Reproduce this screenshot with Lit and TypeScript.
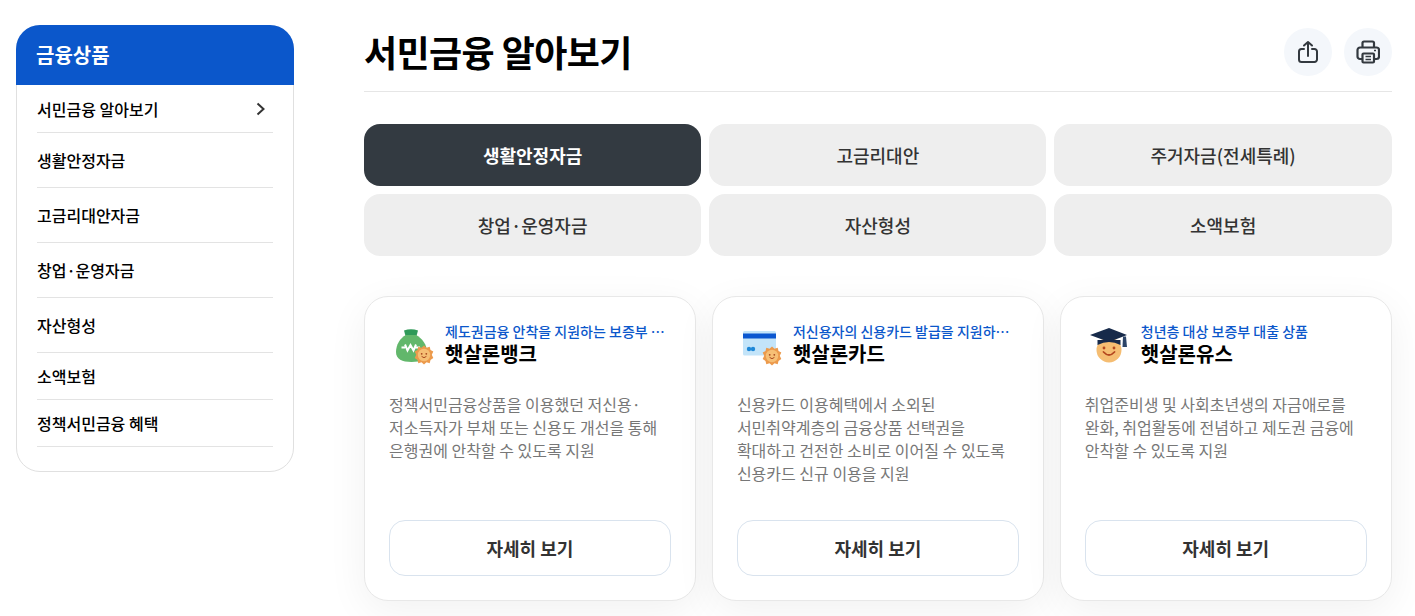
import { LitElement, html, css, svg } from 'lit';
import { customElement } from 'lit/decorators.js';

const sun = (x: number, y: number) => svg`
  <g transform="translate(${x} ${y})">
    <path d="M0-9.500 2.500-7.200 5.700-8.200 6.500-5 9.300-3.400 7.800-.2 9.300 3 6.500 5 5.700 8.200 2.500 7.200 0 9.500-2.500 7.200-5.700 8.200-6.500 5-9.300 3-7.800-.2-9.300-3.400-6.500-5-5.700-8.200-2.500-7.200Z" fill="#ec9a4c"/>
    <circle r="6.200" fill="#f6bf75"/>
    <circle cx="-2.300" cy="-1.200" r=".9" fill="#a8481e"/>
    <circle cx="2.300" cy="-1.200" r=".9" fill="#a8481e"/>
    <path d="M-2.400 1.400Q0 4 2.400 1.400" fill="none" stroke="#a8481e" stroke-width="1"/>
  </g>`;

const bagIcon = html`<svg viewBox="0 0 48 48" width="48" height="48">
  <path d="M15 9.500Q22 7 29 9.500L27.500 15H16.500Z" fill="#2f9a58"/>
  <path d="M17 14H27C33 17 38 24 38 31C38 38 32 41 22.500 41C13 41 7 38 7 31C7 24 11 17 17 14Z" fill="#62b76b"/>
  <path d="M12.500 26.500H16M16 23.500 18.500 29.500 21.500 24 24.500 29.500 27 23.500M26.500 26.500H31" fill="none" stroke="#fff" stroke-width="2"/>
  ${sun(35, 34)}
</svg>`;

const cardIcon = html`<svg viewBox="0 0 48 48" width="48" height="48">
  <rect x="6" y="10" width="33" height="24.500" rx="1.500" fill="#c3e4f9"/>
  <rect x="6" y="12.500" width="33" height="5" fill="#0b57d0"/>
  <circle cx="12" cy="28" r="2.200" fill="#1e88d8"/>
  <circle cx="16" cy="28" r="2.200" fill="#1e88d8"/>
  ${sun(35, 35)}
</svg>`;

const capIcon = html`<svg viewBox="0 0 48 48" width="48" height="48">
  <circle cx="24" cy="29" r="12.500" fill="#f5bd72"/>
  <path d="M12.500 19H35.500V24Q24 18 12.500 24Z" fill="#172a4a"/>
  <path d="M24 7 42 14 24 21 5 14Z" fill="#172a4a"/>
  <path d="M38 15.500H41L42 26H37.500Z" fill="#2c4468"/>
  <circle cx="19" cy="27" r="1.400" fill="#b4471f"/>
  <circle cx="29" cy="27" r="1.400" fill="#b4471f"/>
  <path d="M18.500 31Q24 37 29.500 31" fill="none" stroke="#b4471f" stroke-width="1.800" stroke-linecap="round"/>
</svg>`;

interface Product {
  icon: unknown;
  tag: string;
  name: string;
  lines: string[];
}

const products: Product[] = [
  {
    icon: bagIcon,
    tag: '제도권금융 안착을 지원하는 보증부 …',
    name: '햇살론뱅크',
    lines: ['정책서민금융상품을 이용했던 저신용·', '저소득자가 부채 또는 신용도 개선을 통해', '은행권에 안착할 수 있도록 지원'],
  },
  {
    icon: cardIcon,
    tag: '저신용자의 신용카드 발급을 지원하…',
    name: '햇살론카드',
    lines: ['신용카드 이용혜택에서 소외된', '서민취약계층의 금융상품 선택권을', '확대하고 건전한 소비로 이어질 수 있도록', '신용카드 신규 이용을 지원'],
  },
  {
    icon: capIcon,
    tag: '청년층 대상 보증부 대출 상품',
    name: '햇살론유스',
    lines: ['취업준비생 및 사회초년생의 자금애로를', '완화, 취업활동에 전념하고 제도권 금융에', '안착할 수 있도록 지원'],
  },
];

const tabs = ['생활안정자금', '고금리대안', '주거자금(전세특례)', '창업·운영자금', '자산형성', '소액보험'];

@customElement('app-root')
export class AppRoot extends LitElement {
  static styles = css`
    :host {
      display: block;
      height: 616px;
      overflow: hidden;
      background: #fff;
      font-family: 'Noto Sans CJK KR', 'Noto Sans', sans-serif;
      color: #000;
    }
    .page {
      display: flex;
      align-items: flex-start;
      padding: 25px 23.3px 0 16px;
    }
    .side {
      width: 278px;
      flex: none;
      box-sizing: border-box;
      height: 447px;
      border: 1px solid #e0e0e0;
      border-radius: 24px;
      margin-right: 70px;
    }
    .side-head {
      margin: -1px -1px 0;
      height: 60px;
      background: #0b57cb;
      border-radius: 24px 24px 0 0;
      color: #fff;
      font-size: 20px;
      font-weight: 700;
      line-height: 60px;
      padding-left: 20px;
    }
    .side ul {
      list-style: none;
      margin: 0;
      padding: 0 20px;
    }
    .side li {
      display: flex;
      align-items: center;
      justify-content: space-between;
      height: 55px;
      box-sizing: border-box;
      border-bottom: 1px solid #e3e3e3;
      font-size: 16px;
      font-weight: 500;
    }
    .side li.first { height: 48px; }
    .side li.short { height: 47px; }
    .main { flex: 1; min-width: 0; }
    .title-row {
      display: flex;
      align-items: center;
      justify-content: space-between;
      box-sizing: border-box;
      height: 67px;
      padding: 3px 0 15px;
      border-bottom: 1px solid #e6e6e6;
      margin-bottom: 32px;
    }
    h1 {
      margin: 0 0 3px;
      font-size: 36px;
      line-height: 48px;
      font-weight: 700;
      letter-spacing: -0.6px;
    }
    .actions { display: flex; gap: 12px; }
    .round {
      width: 48px;
      height: 48px;
      border-radius: 50%;
      background: #f4f7fb;
      display: flex;
      align-items: center;
      justify-content: center;
    }
    .tabs {
      display: grid;
      grid-template-columns: repeat(3, minmax(0, 1fr));
      gap: 8px;
      margin-bottom: 40px;
    }
    .tab {
      height: 62px;
      border-radius: 16px;
      background: #eeeeee;
      color: #333;
      font-size: 18px;
      font-weight: 500;
      display: flex;
      align-items: center;
      justify-content: center;
    }
    .tab.on {
      background: #333a41;
      color: #fff;
      font-weight: 700;
    }
    .cards {
      display: grid;
      grid-template-columns: repeat(3, minmax(0, 1fr));
      gap: 16px;
    }
    .card {
      height: 305px;
      box-sizing: border-box;
      border: 1px solid #e8e8e8;
      border-radius: 24px;
      background: #fff;
      box-shadow: 0 10px 40px rgba(0, 0, 0, 0.06);
      padding: 24px;
      display: flex;
      flex-direction: column;
    }
    .card-head {
      display: flex;
      align-items: flex-start;
      gap: 8px;
      height: 48px;
      margin-bottom: 24px;
    }
    .card-head svg { flex: none; }
    .card-titles { min-width: 0; flex: 1; }
    .tag {
      font-size: 14px;
      line-height: 20px;
      font-weight: 500;
      color: #0b57cb;
      white-space: nowrap;
    }
    .name {
      font-size: 20px;
      line-height: 26px;
      font-weight: 700;
      color: #000;
    }
    .desc {
      flex: 1;
      font-size: 16px;
      line-height: 23px;
      color: #777;
    }
    .btn {
      height: 56px;
      box-sizing: border-box;
      border: 1px solid #d9e3ee;
      border-radius: 16px;
      background: #fff;
      color: #333;
      font-size: 18px;
      font-weight: 700;
      display: flex;
      align-items: center;
      justify-content: center;
    }
  `;

  render() {
    return html`
      <div class="page">
        <aside class="side">
          <div class="side-head">금융상품</div>
          <ul>
            <li class="first">
              서민금융 알아보기
              <svg width="24" height="24" viewBox="0 0 24 24"><path d="M8.500 6.500 14.500 12 8.500 17.500" fill="none" stroke="#333" stroke-width="2"/></svg>
            </li>
            <li>생활안정자금</li>
            <li>고금리대안자금</li>
            <li>창업·운영자금</li>
            <li>자산형성</li>
            <li class="short">소액보험</li>
            <li class="short">정책서민금융 혜택</li>
          </ul>
        </aside>
        <main class="main">
          <div class="title-row">
            <h1>서민금융 알아보기</h1>
            <div class="actions">
              <div class="round">
                <svg width="24" height="24" viewBox="0 0 24 24" fill="none" stroke="#33393f" stroke-width="2" stroke-linecap="round" stroke-linejoin="round">
                  <path d="M8 9H5.500A2.500 2.500 0 0 0 3 11.500V19.500A2.500 2.500 0 0 0 5.500 22H18.500A2.500 2.500 0 0 0 21 19.500V11.500A2.500 2.500 0 0 0 18.500 9H16"/>
                  <path d="M12 16V2M8 5.500 12 2 16 5.500"/>
                </svg>
              </div>
              <div class="round">
                <svg width="24" height="24" viewBox="0 0 24 24" fill="none" stroke="#33393f" stroke-width="2.200" stroke-linejoin="round">
                  <path d="M6.500 7V3A1.500 1.500 0 0 1 8 1.500H16.500A1.500 1.500 0 0 1 18 3V7"/>
                  <path d="M6.500 19H4A2.500 2.500 0 0 1 1.500 16.500V10A2.500 2.500 0 0 1 4 7.500H20.500A2.500 2.500 0 0 1 23 10V16.500A2.500 2.500 0 0 1 20.500 19H18"/>
                  <rect x="6.500" y="13.500" width="11.500" height="9" rx="1"/>
                  <path d="M9.500 16.500H15M9.500 19.500H15" stroke-width="1.500"/>
                  <path d="M18 10.500H20" stroke-width="1.500"/>
                </svg>
              </div>
            </div>
          </div>
          <div class="tabs">
            ${tabs.map((t, i) => html`<div class="tab ${i === 0 ? 'on' : ''}">${t}</div>`)}
          </div>
          <div class="cards">
            ${products.map(
              (p) => html`
                <article class="card">
                  <div class="card-head">
                    ${p.icon}
                    <div class="card-titles">
                      <div class="tag">${p.tag}</div>
                      <div class="name">${p.name}</div>
                    </div>
                  </div>
                  <div class="desc">${p.lines.map((l) => html`<div>${l}</div>`)}</div>
                  <div class="btn">자세히 보기</div>
                </article>
              `
            )}
          </div>
        </main>
      </div>
    `;
  }
}
